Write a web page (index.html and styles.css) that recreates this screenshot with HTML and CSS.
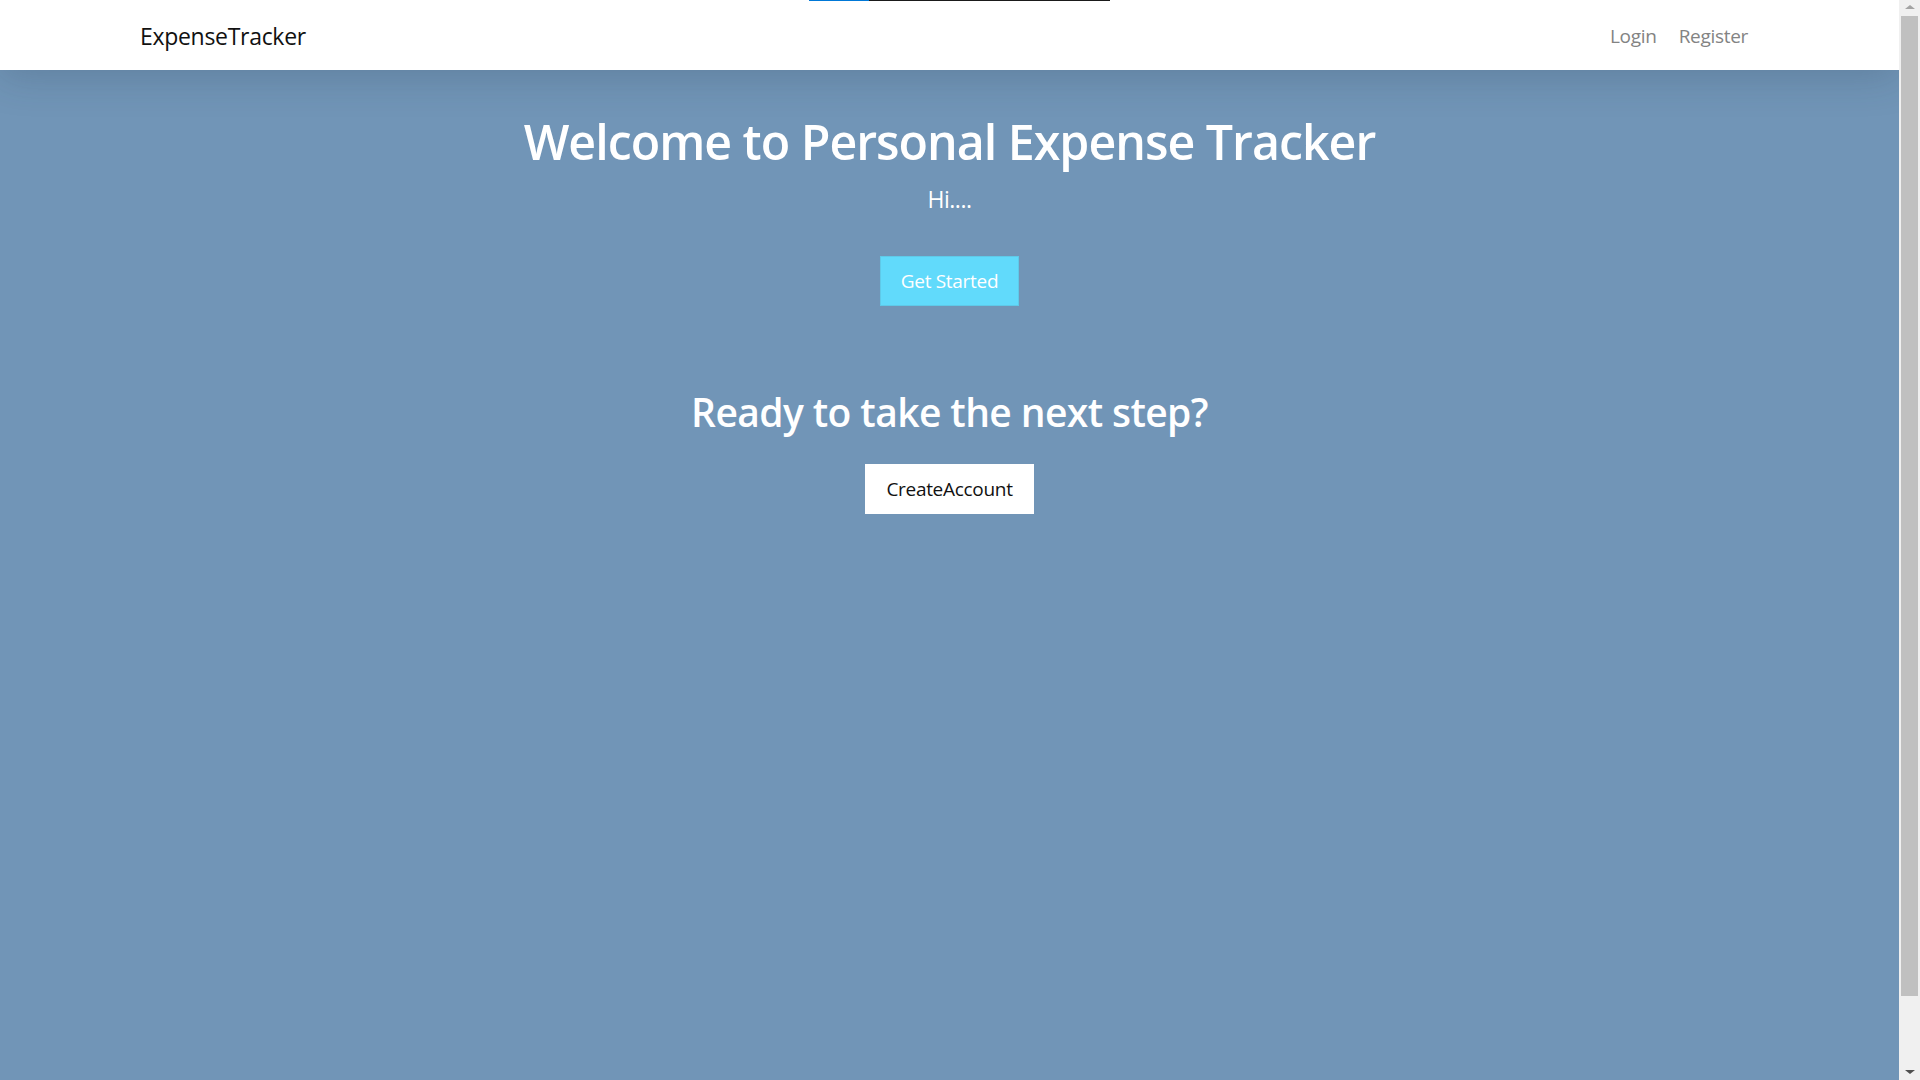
FILE: index.html
```html
<!DOCTYPE html>
<html lang="en">
<head>
<meta charset="utf-8">
<title>ExpenseTracker</title>
<link rel="stylesheet" href="styles.css">
</head>
<body>
<div class="progress"><span class="progress-blue"></span><span class="progress-dark"></span></div>
<header class="navbar">
  <a class="brand" href="#">ExpenseTracker</a>
  <nav class="nav">
    <a class="nav-link" href="#">Login</a>
    <a class="nav-link" href="#">Register</a>
  </nav>
</header>
<main class="hero">
  <h1 class="hero-title">Welcome to Personal Expense Tracker</h1>
  <p class="hero-sub">Hi....</p>
  <a class="btn btn-cyan" href="#">Get Started</a>
  <h2 class="hero-title2">Ready to take the next step?</h2>
  <a class="btn btn-white" href="#">CreateAccount</a>
</main>
<div class="scrollbar">
  <span class="sb-arrow sb-up"></span>
  <span class="sb-thumb"></span>
  <span class="sb-arrow sb-down"></span>
</div>
</body>
</html>
```
FILE: styles.css
```css
html {
  margin: 0;
}
body {
  margin: 0 21px 0 0;
  min-height: 100vh;
  background: #7195b7;
  font-family: "Open Sans", "Noto Sans", Arial, sans-serif;
  color: #fff;
}
a {
  text-decoration: none;
}
.progress {
  position: absolute;
  top: 0;
  left: 809px;
  display: flex;
  height: 1px;
  z-index: 5;
}
.progress-blue {
  width: 60px;
  background: #0078d7;
}
.progress-dark {
  width: 241px;
  background: #1a1a1a;
}
.navbar {
  position: relative;
  z-index: 2;
  height: 70px;
  box-sizing: border-box;
  background: #fff;
  display: flex;
  align-items: center;
  justify-content: space-between;
  padding: 2px 151px 0 140px;
  box-shadow: 0 6px 40px rgba(30, 50, 70, 0.22);
}
.brand {
  font-size: 23px;
  color: #111;
  letter-spacing: -0.3px;
}
.nav {
  display: flex;
  gap: 22px;
}
.nav-link {
  font-size: 19px;
  color: #838383;
  letter-spacing: -0.3px;
}
.hero {
  display: flex;
  flex-direction: column;
  align-items: center;
  text-align: center;
  padding-top: 41px;
}
.hero-title {
  margin: 0;
  font-size: 48.3px;
  font-weight: 600;
  line-height: 60px;
  letter-spacing: -1px;
}
.hero-sub {
  margin: 12px 0 0;
  font-size: 23px;
  line-height: 32px;
  letter-spacing: -0.5px;
}
.btn {
  display: inline-flex;
  align-items: center;
  justify-content: center;
  height: 50px;
  box-sizing: border-box;
  padding: 0 19px;
  font-size: 19px;
  letter-spacing: -0.3px;
  white-space: nowrap;
}
.btn-cyan {
  margin-top: 41px;
  min-width: 139px;
  background: #61dafb;
  color: #fff;
  border: 1px solid #5fc9e8;
}
.btn-white {
  margin-top: 28px;
  min-width: 169px;
  background: #fff;
  color: #111;
}
.hero-title2 {
  margin: 82px 0 0;
  font-size: 39px;
  font-weight: 600;
  line-height: 48px;
  letter-spacing: -0.6px;
}
.scrollbar {
  position: fixed;
  top: 0;
  right: 0;
  bottom: 0;
  width: 21px;
  background: #f0f0f0;
  display: flex;
  flex-direction: column;
  align-items: center;
  z-index: 10;
}
.sb-arrow {
  width: 0;
  height: 0;
  border-left: 5px solid transparent;
  border-right: 5px solid transparent;
}
.sb-up {
  margin: 5px 0 7px;
  border-bottom: 4px solid #a3a3a3;
}
.sb-down {
  margin: auto 0 6px;
  border-top: 4px solid #505050;
}
.sb-thumb {
  width: 17px;
  height: 980px;
  background: #c0c0c0;
  flex: 0 0 auto;
}
```
